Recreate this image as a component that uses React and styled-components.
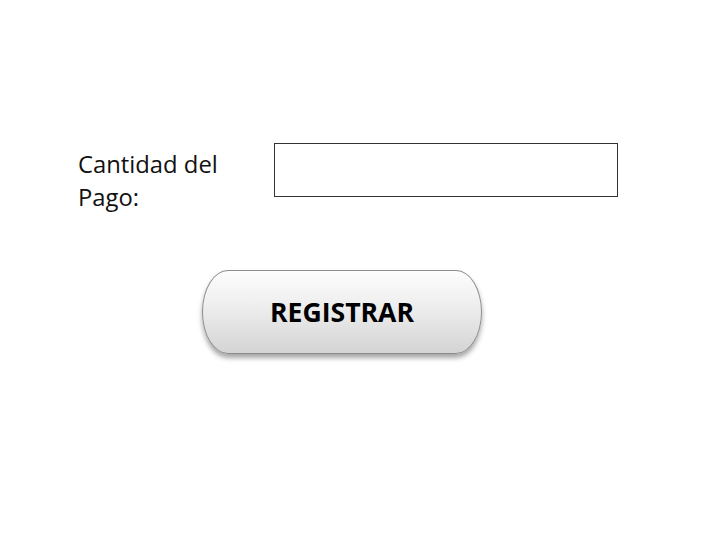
import React from 'react'
import styled, { createGlobalStyle } from 'styled-components'

const Global = createGlobalStyle`
  html, body { margin: 0; padding: 0; background: #fff; }
  body { font-family: "Open Sans", "Liberation Sans", sans-serif; }
`;

const Page = styled.div`
  width: 720px;
  height: 540px;
  padding: 143px 0 0 78px;
  box-sizing: border-box;
  display: flex;
  flex-direction: column;
`;

const Row = styled.div`
  display: flex;
  align-items: flex-start;
`;

const Label = styled.label`
  width: 196px;
  height: 72px;
  font-size: 23.8px;
  line-height: 33px;
  color: #111;
  padding-top: 5px;
  padding-right: 40px;
  box-sizing: border-box;
`;

const Input = styled.input`
  width: 344px;
  height: 54px;
  box-sizing: border-box;
  border: 1px solid #333;
  margin: 0;
  padding: 0 8px;
  font-family: inherit;
  font-size: 18px;
  outline: none;
`;

const ButtonRow = styled.div`
  padding: 55px 0 0 124px;
`;

const Button = styled.button`
  width: 280px;
  height: 84px;
  border-radius: 26px / 42px;
  border: 1px solid #8c8c8c;
  background: linear-gradient(to bottom, #fdfdfd 0%, #ededed 45%, #d4d4d4 100%);
  box-shadow: 0 4px 5px rgba(0, 0, 0, 0.35);
  font-family: "Open Sans", "Liberation Sans", sans-serif;
  font-weight: 700;
  font-size: 26.6px;
  color: #000;
  cursor: pointer;
  padding: 0;
`;

export default function App() {
  return (
    <>
      <Global />
      <Page>
        <Row>
          <Label htmlFor="monto">Cantidad del Pago:</Label>
          <Input id="monto" type="text" />
        </Row>
        <ButtonRow>
          <Button>REGISTRAR</Button>
        </ButtonRow>
      </Page>
    </>
  )
}
